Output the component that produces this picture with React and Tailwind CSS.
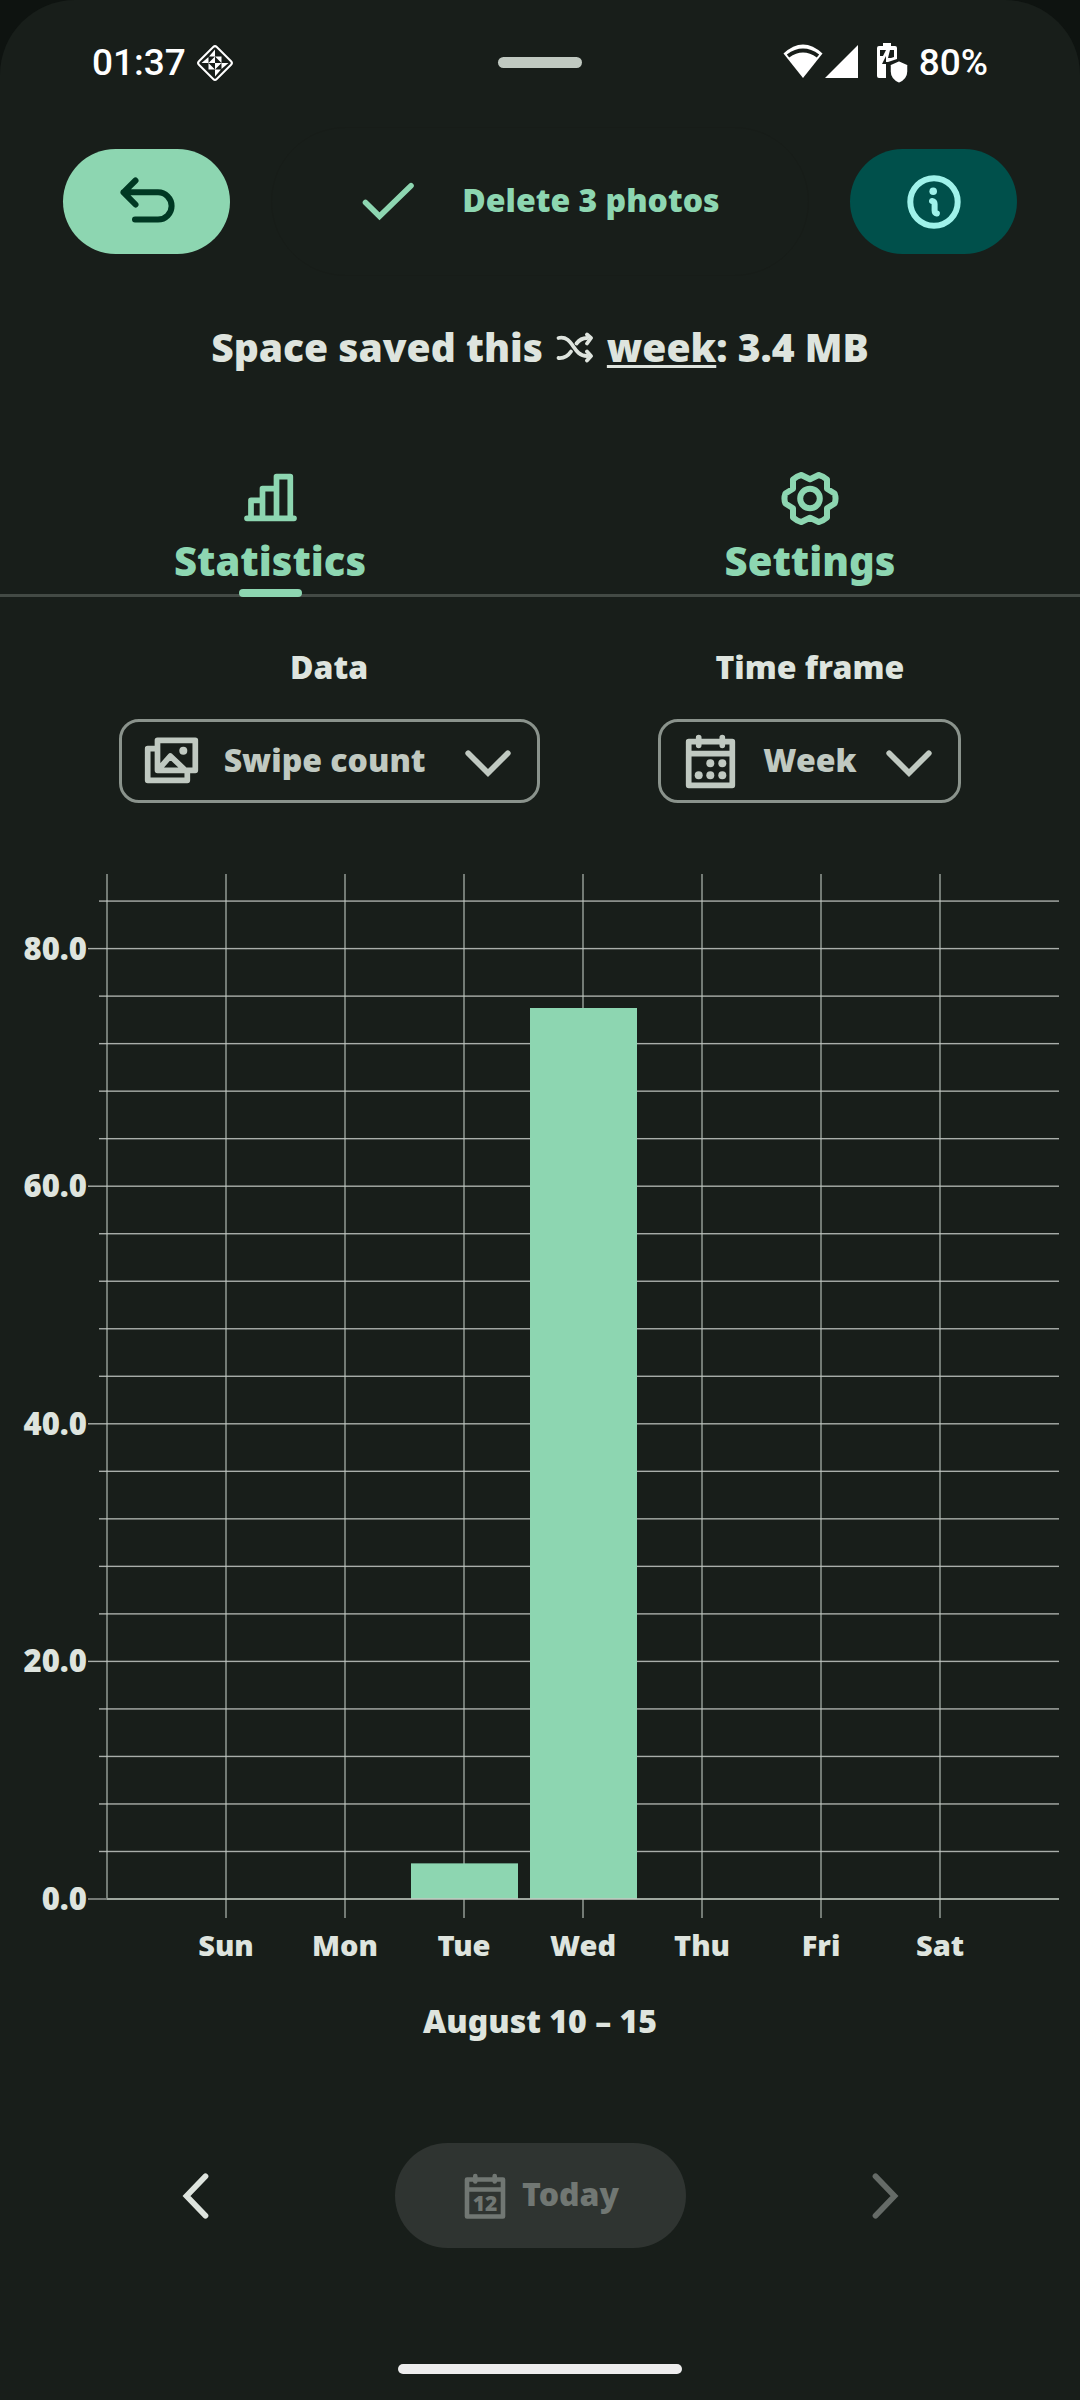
const days = [
  { label: "Sun", value: 0 },
  { label: "Mon", value: 0 },
  { label: "Tue", value: 3 },
  { label: "Wed", value: 75 },
  { label: "Thu", value: 0 },
  { label: "Fri", value: 0 },
  { label: "Sat", value: 0 },
];

function UndoIcon() {
  return (
    <svg viewBox="0 0 64 64" className="size-16" fill="none" stroke="currentColor" strokeWidth="6" strokeLinecap="round" strokeLinejoin="round" aria-hidden="true">
      <path d="M20.5 10.5 8.5 22.3 20.5 34.5M8.5 22.3H43a13.6 13.6 0 0 1 0 27.2H20" />
    </svg>
  );
}

function CheckIcon() {
  return (
    <svg viewBox="0 0 56 42" className="h-[42px] w-14" fill="none" stroke="currentColor" strokeWidth="5.6" strokeLinecap="round" aria-hidden="true">
      <path d="M5.5 21.5 19.5 35.3 51 4.7" />
    </svg>
  );
}

function InfoIcon() {
  return (
    <svg viewBox="0 0 64 64" className="size-16" fill="none" stroke="currentColor" strokeWidth="6" strokeLinecap="round" strokeLinejoin="round" aria-hidden="true">
      <circle cx="32" cy="32" r="23.7" />
      <circle cx="31.2" cy="21.2" r="3.8" fill="currentColor" stroke="none" />
      <path d="M30 31q2.6.4 2.6 3v6.500q0 2.500 2.300 3" />
    </svg>
  );
}

function ShuffleIcon() {
  return (
    <svg viewBox="0 0 40 32" className="h-8 w-10" fill="none" stroke="currentColor" strokeWidth="3.8" strokeLinecap="round" strokeLinejoin="round" aria-hidden="true">
      <path d="M3.500 7C19 4 17 25 32 25M3.500 27C9 27.500 13 25 16 20.500M21.500 12.500C24.500 8.500 28 7 32 7" />
      <path d="M32 3.500 36 7 32 12.500M32 20.500 36 25 32 29.500" />
    </svg>
  );
}

function StatsIcon() {
  return (
    <svg viewBox="0 0 60 56" className="h-14 w-[60px]" fill="none" stroke="currentColor" strokeWidth="5.7" strokeLinecap="round" strokeLinejoin="round" aria-hidden="true">
      <path d="M7 48.300H54M11 48V30.300H22.500M22.500 48V18.700H36.500M36.500 48V6.700H50.300V48" />
    </svg>
  );
}

function GearIcon() {
  return (
    <svg viewBox="-30 -28.500 60 56" className="h-14 w-[60px]" fill="none" stroke="currentColor" strokeWidth="6" strokeLinejoin="round" aria-hidden="true">
      <circle r="9.800" />
      <path d="M0-19.200 8.700-23.500Q13-22.500 17-19V-9.700L24.600-5Q26.500 0 24.600 5L17 9.700V19Q13 22.500 8.700 23.500L0 19.200-8.700 23.500Q-13 22.500-17 19V9.700L-24.600 5Q-26.500 0-24.600-5L-17-9.700V-19Q-13-22.500-8.700-23.500Z" />
    </svg>
  );
}

function PhotosIcon() {
  return (
    <svg viewBox="0 0 63 58" className="h-[58px] w-[63px]" fill="none" stroke="currentColor" strokeWidth="5.7" strokeLinecap="round" strokeLinejoin="round" aria-hidden="true">
      <path d="M17.500 8.300H55.300V38.300H17.500ZM14.700 16.700H7.700V48.300H47.300V40M19 37 30.300 24 44 37" />
      <circle cx="43.300" cy="18.700" r="4" fill="currentColor" stroke="none" />
    </svg>
  );
}

function WeekIcon() {
  return (
    <svg viewBox="0 0 57 60" className="h-[60px] w-[57px]" fill="none" stroke="currentColor" strokeWidth="5.7" strokeLinecap="round" strokeLinejoin="round" aria-hidden="true">
      <path d="M6.700 10.700H50.300V54.300H6.700ZM6.700 22.700H50.300M16.700 6.700V14.300M40.300 6.700V14.300" />
      <g fill="currentColor" stroke="none">
        <circle cx="28.300" cy="32.300" r="4" />
        <circle cx="40.300" cy="32.300" r="4" />
        <circle cx="16.700" cy="44.300" r="4" />
        <circle cx="28.300" cy="44.300" r="4" />
        <circle cx="40.300" cy="44.300" r="4" />
      </g>
    </svg>
  );
}

function TodayIcon() {
  return (
    <svg viewBox="0 0 48 52" className="h-[52px] w-12" fill="none" stroke="currentColor" strokeWidth="4.600" strokeLinecap="round" strokeLinejoin="round" aria-hidden="true">
      <path d="M6 9.500H42V46.500H6ZM6 19.500H42M14.300 6V11.500M33.700 6V11.500" />
      <text x="24" y="40.500" textAnchor="middle" fontSize="21" fill="currentColor" stroke="none">12</text>
    </svg>
  );
}

function ChevronDown() {
  return (
    <svg viewBox="0 0 52 32" className="h-8 w-[52px]" fill="none" stroke="currentColor" strokeWidth="5.700" strokeLinecap="round" aria-hidden="true">
      <path d="M6.200 6.200 26 26 45.800 6.200" />
    </svg>
  );
}

function NavChevron({ d }) {
  return (
    <svg viewBox="0 0 32 52" className="h-[52px] w-8" fill="none" stroke="currentColor" strokeWidth="5.700" strokeLinecap="round" aria-hidden="true">
      <path d={d} />
    </svg>
  );
}

function StatusBar() {
  return (
    <header className="grid h-[123px] grid-cols-3 items-center px-[92px] pt-[2px] font-['Roboto',sans-serif] text-[37px] leading-10 font-medium text-white">
      <div className="flex items-center gap-[9px]">
        <span>01:37</span>
        <svg viewBox="-20 -20 40 40" className="size-10" aria-hidden="true">
          <rect x="-12.600" y="-12.600" width="25.200" height="25.200" rx="2.500" transform="rotate(45)" fill="none" stroke="#fff" strokeWidth="2" />
          <path fill="#fff" d="M0-13.500V-6.500H-6ZM0 13.500V6.500H6ZM-13.500 0H-6.500V-6ZM13.500 0H6.500V6ZM0 0H-6.500L0-6.500ZM0 0H6.500L0 6.500ZM0-6.500H6.500V0ZM0 6.500H-6.500V0Z" />
        </svg>
      </div>
      <div className="h-[11px] w-[84px] justify-self-center rounded-full bg-[#c0c9c1]" />
      <div className="flex items-center justify-end">
        <svg viewBox="0 0 128 42" className="h-[42px] w-32" fill="#fff" aria-hidden="true">
          <path d="M.5 11.500Q20-6.500 39.500 11.500L20 36Z" />
          <path d="M5 14Q20 3 35 14" fill="none" stroke="#181e1a" strokeWidth="4" />
          <path d="M75 3V36H42ZM94 6q0-2 2-2h4V1h8v3h4q2 0 2 2v11l-9 3v16H96q-2 0-2-2Z" />
          <path d="M97 8h6l-3 6h-3ZM107 8h4v7l-3 1h-3l2-8ZM103 14l-4 8h4v14h3V20l-3 0Z" fill="#181e1a" />
          <path d="M116 18.500l9 4v7q0 8-9 12-9-4-9-12v-7Z" stroke="#181e1a" strokeWidth="1.500" />
        </svg>
        <span className="ml-2">80%</span>
      </div>
    </header>
  );
}

function Picker({ label, id, value, icon, width, inset }) {
  return (
    <div className="flex flex-col items-center gap-8">
      <label htmlFor={id} className="leading-10">{label}</label>
      <div className={`relative ${width} text-[#c0c9c1]`}>
        <span className={`pointer-events-none absolute inset-y-0 flex items-center ${inset}`}>{icon}</span>
        <select id={id} defaultValue={value} className="h-[84px] w-full appearance-none rounded-[20px] border-[3px] border-[#8a938c] bg-transparent pb-[3px] pl-[102px]">
          <option>{value}</option>
        </select>
        <span className="pointer-events-none absolute inset-y-0 right-[26px] flex items-center pt-1">
          <ChevronDown />
        </span>
      </div>
    </div>
  );
}

const zeroY = 1039;
const unit = 11.88;

function Chart() {
  return (
    <svg viewBox="0 0 1080 1110" className="mt-[57px] w-full" role="img" aria-label="Swipe count by day">
      {Array.from({ length: 21 }, (_, i) => (i + 1) * 4).map((v) => (
        <rect key={v} x={v % 20 ? 99 : 88} y={zeroY - v * unit - 0.7} width={v % 20 ? 960 : 971} height="1.400" fill="#a9aeaa" />
      ))}
      {Array.from({ length: 8 }, (_, i) => (
        <rect key={i} x={106 + i * 119} y="14" width="2" height={i ? 1044 : 1024} fill="#c0c9c1" fillOpacity="0.550" />
      ))}
      {days.map((d, i) => (
        <rect key={d.label} x={173 + i * 119} y={zeroY - d.value * unit} width="107" height={d.value * unit} fill="#8dd6b1" />
      ))}
      <rect x="88" y="1038" width="19" height="2" fill="#747975" />
      <rect x="107" y="1038" width="952" height="2" fill="#c0c9c1" fillOpacity="0.800" />
      <g fill="#dee4de" textAnchor="end" fontSize="31">
        {[0, 20, 40, 60, 80].map((v) => (
          <text key={v} x="87" y={zeroY - v * unit + 11}>{v.toFixed(1)}</text>
        ))}
      </g>
      <g fill="#dee4de" textAnchor="middle" fontSize="29">
        {days.map((d, i) => (
          <text key={d.label} x={226 + i * 119} y="1096">{d.label}</text>
        ))}
      </g>
    </svg>
  );
}

const tab = "relative flex flex-col items-center gap-[11px] pb-[9px] text-[40px] leading-[48px] text-[#8dd6b1]";

export default function App() {
  return (
    <div className="bg-[#0e1310]">
      <main className="flex min-h-screen flex-col rounded-t-[75px] bg-[#181e1a] pb-[26px] font-['Noto_Sans','Open_Sans',sans-serif] text-[32px] font-black text-[#dee4de]">
        <StatusBar />
        <div className="mt-1 flex h-[149px] items-center gap-[41px] px-[63px]">
          <button aria-label="Undo" className="flex h-[105px] w-[167px] items-center justify-center rounded-full bg-[#8dd6b1] text-[#003823]">
            <UndoIcon />
          </button>
          <button className="flex h-full flex-1 items-center justify-center gap-[46px] rounded-full border border-[#171c18] text-[#8dd6b1]">
            <CheckIcon />
            <span className="pb-1 leading-10">Delete 3 photos</span>
          </button>
          <button aria-label="Information" className="flex h-[105px] w-[167px] items-center justify-center rounded-full bg-[#00504b] text-[#9ff2ea]">
            <InfoIcon />
          </button>
        </div>

        <h1 className="mt-[35px] flex h-[72px] items-center justify-center gap-3 text-[39px] leading-[48px]">
          <span>Space saved this</span>
          <ShuffleIcon />
          <span>
            <a href="#week" className="underline decoration-[3px] underline-offset-[3px]">week</a>: 3.4 MB
          </span>
        </h1>

        <div role="tablist" className="mt-[87px] grid grid-cols-2 border-b-[3px] border-[#434a45]">
          <button role="tab" aria-selected="true" className={tab}>
            <StatsIcon />
            Statistics
            <span className="absolute -bottom-[3px] h-2 w-[63px] rounded-full bg-[#8dd6b1]" />
          </button>
          <button role="tab" aria-selected="false" className={tab}>
            <GearIcon />
            Settings
          </button>
        </div>

        <div className="mt-[50px] flex justify-evenly">
          <Picker label="Data" id="data" value="Swipe count" icon={<PhotosIcon />} width="w-[421px]" inset="left-[21px]" />
          <Picker label="Time frame" id="frame" value="Week" icon={<WeekIcon />} width="w-[303px]" inset="left-6" />
        </div>

        <Chart />

        <p className="mt-[31px] text-center leading-10">August 10 – 15</p>

        <nav className="mt-[102px] flex items-center justify-between px-[143px]">
          <button aria-label="Previous week" className="flex size-[105px] items-center justify-center rounded-full">
            <NavChevron d="M25.500 6.200 6.500 26 25.500 45.800" />
          </button>
          <button disabled className="flex h-[105px] w-[291px] items-center justify-center gap-[13px] rounded-full bg-[#2f3431] text-[#717773]">
            <TodayIcon />
            <span className="pb-[3px] leading-10">Today</span>
          </button>
          <button aria-label="Next week" disabled className="flex size-[105px] items-center justify-center rounded-full text-[#656b67]">
            <NavChevron d="M6.500 6.200 25.500 26 6.500 45.800" />
          </button>
        </nav>

        <div className="mt-auto h-[10px] w-[284px] self-center rounded-full bg-[#ededed]" />
      </main>
    </div>
  );
}
